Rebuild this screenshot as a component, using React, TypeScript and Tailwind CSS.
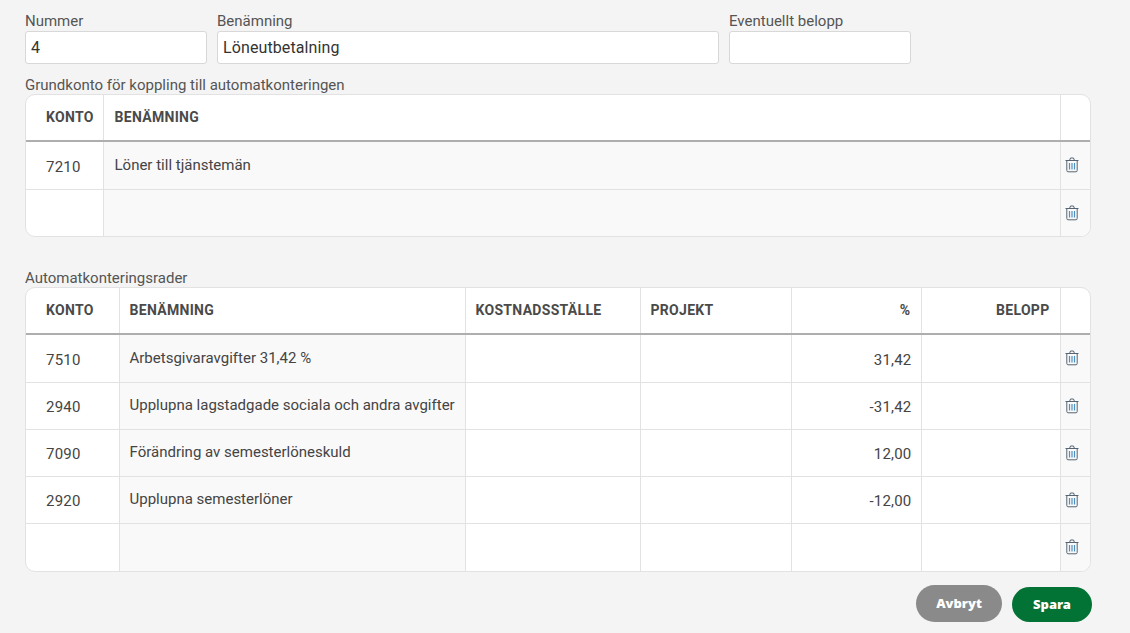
type Col = { title: string; width: number; right?: boolean; tint?: boolean; inset?: boolean };

const topCols: Col[] = [
  { title: 'Konto', width: 77 },
  { title: 'Benämning', width: 957, tint: true, inset: true },
];

const bottomCols: Col[] = [
  { title: 'Konto', width: 93 },
  { title: 'Benämning', width: 346, tint: true },
  { title: 'Kostnadsställe', width: 175 },
  { title: 'Projekt', width: 151 },
  { title: '%', width: 130, right: true },
  { title: 'Belopp', width: 139, right: true },
];

const topRows = [['7210', 'Löner till tjänstemän'], ['', '']];

const bottomRows = [
  ['7510', 'Arbetsgivaravgifter 31,42 %', '', '', '31,42', ''],
  ['2940', 'Upplupna lagstadgade sociala och andra avgifter', '', '', '-31,42', ''],
  ['7090', 'Förändring av semesterlöneskuld', '', '', '12,00', ''],
  ['2920', 'Upplupna semesterlöner', '', '', '-12,00', ''],
  ['', '', '', '', '', ''],
];

function TrashIcon() {
  return (
    <svg width="14" height="16" viewBox="0 0 14 16" fill="none" className="ml-[4px] block">
      <path d="M0.5 3.5H13.5" stroke="#566473" />
      <path d="M4.5 3.5L5.5 1H8.5L9.5 3.5" stroke="#566473" />
      <path d="M1.8 3.5V13.5C1.8 14.3 2.4 14.8 3 14.8H11C11.7 14.8 12.2 14.3 12.2 13.5V3.5" stroke="#566473" />
      <path d="M4.5 6V12.5M7 6V12.5M9.5 6V12.5" stroke="#4f8fc2" strokeWidth="1.2" />
    </svg>
  );
}

function Field({ label, value, width }: { label: string; value?: string; width: string }) {
  return (
    <label className={`flex flex-col ${width}`}>
      <span className="h-[20px] text-[15px] leading-[20px] text-[#555]">{label}</span>
      <input
        readOnly
        value={value ?? ''}
        className="h-[33px] w-full rounded-[3px] border border-[#d8d8d8] bg-white px-[5px] text-[16px] tracking-[0.1px] text-[#333] outline-none"
      />
    </label>
  );
}

function DataTable({ cols, rows, tallLast }: { cols: Col[]; rows: string[][]; tallLast?: boolean }) {
  return (
    <div className="w-[1066px] overflow-hidden rounded-[10px] border border-[#e2e2e2] bg-white">
      <table className="w-full table-fixed border-collapse">
        <colgroup>
          {cols.map((c) => (
            <col key={c.title} style={{ width: c.width }} />
          ))}
          <col />
        </colgroup>
        <thead>
          <tr className="h-[46px] border-b-2 border-[#aeaeae]">
            {cols.map((c, i) => (
              <th
                key={c.title}
                className={`border-r border-[#e2e2e2] px-[10px] text-[14px] font-bold uppercase tracking-[0.3px] text-[#4a4a4a] ${
                  c.right ? 'text-right' : 'text-left'
                } ${i === 0 ? 'pl-[20px]' : ''} ${c.inset ? 'pl-[11px]' : ''}`}
              >
                {c.title}
              </th>
            ))}
            <th />
          </tr>
        </thead>
        <tbody>
          {rows.map((row, r) => (
            <tr
              key={r}
              className={`border-b border-[#e2e2e2] last:border-b-0 ${
                r === 0 || (tallLast && r === rows.length - 1) ? 'h-[48px]' : 'h-[47px]'
              }`}
            >
              {row.map((cell, i) => (
                <td
                  key={i}
                  className={`border-r border-[#e2e2e2] whitespace-nowrap px-[10px] text-[#444] ${
                    cols[i].tint ? 'bg-[#f9f9f9] pb-[1px] text-[15px]' : 'pt-[3px] text-[15px] tracking-[0.2px]'
                  } ${cols[i].right ? 'pr-[9px] text-right' : ''} ${i === 0 ? 'pl-[20px]' : ''} ${
                    cols[i].inset ? 'pl-[11px]' : ''
                  }`}
                >
                  {cell}
                </td>
              ))}
              <td className="bg-[#f9f9f9]">
                <TrashIcon />
              </td>
            </tr>
          ))}
        </tbody>
      </table>
    </div>
  );
}

export default function App() {
  return (
    <div className="h-[633px] w-[1130px] overflow-hidden bg-[#f4f4f4] font-['Roboto',sans-serif]">
      <div className="flex flex-col pl-[25px] pt-[11px]">
        <div className="flex gap-[10px]">
          <Field label="Nummer" value="4" width="w-[182px]" />
          <Field label="Benämning" value="Löneutbetalning" width="w-[502px]" />
          <Field label="Eventuellt belopp" width="w-[182px]" />
        </div>
        <div className="mt-[11px] h-[19px] text-[15px] leading-[20px] text-[#555]">
          Grundkonto för koppling till automatkonteringen
        </div>
        <DataTable cols={topCols} rows={topRows} />
        <div className="mt-[31px] h-[19px] text-[15px] leading-[20px] text-[#555]">Automatkonteringsrader</div>
        <DataTable cols={bottomCols} rows={bottomRows} tallLast />
        <div className="mt-[13px] flex w-[1067px] items-end justify-end gap-[10px] font-['Noto_Sans',sans-serif] text-[13px] font-black text-white">
          <button className="h-[37px] w-[86px] rounded-full bg-[#898a89]">Avbryt</button>
          <button className="h-[35px] w-[80px] rounded-full bg-[#037235]">Spara</button>
        </div>
      </div>
    </div>
  );
}
